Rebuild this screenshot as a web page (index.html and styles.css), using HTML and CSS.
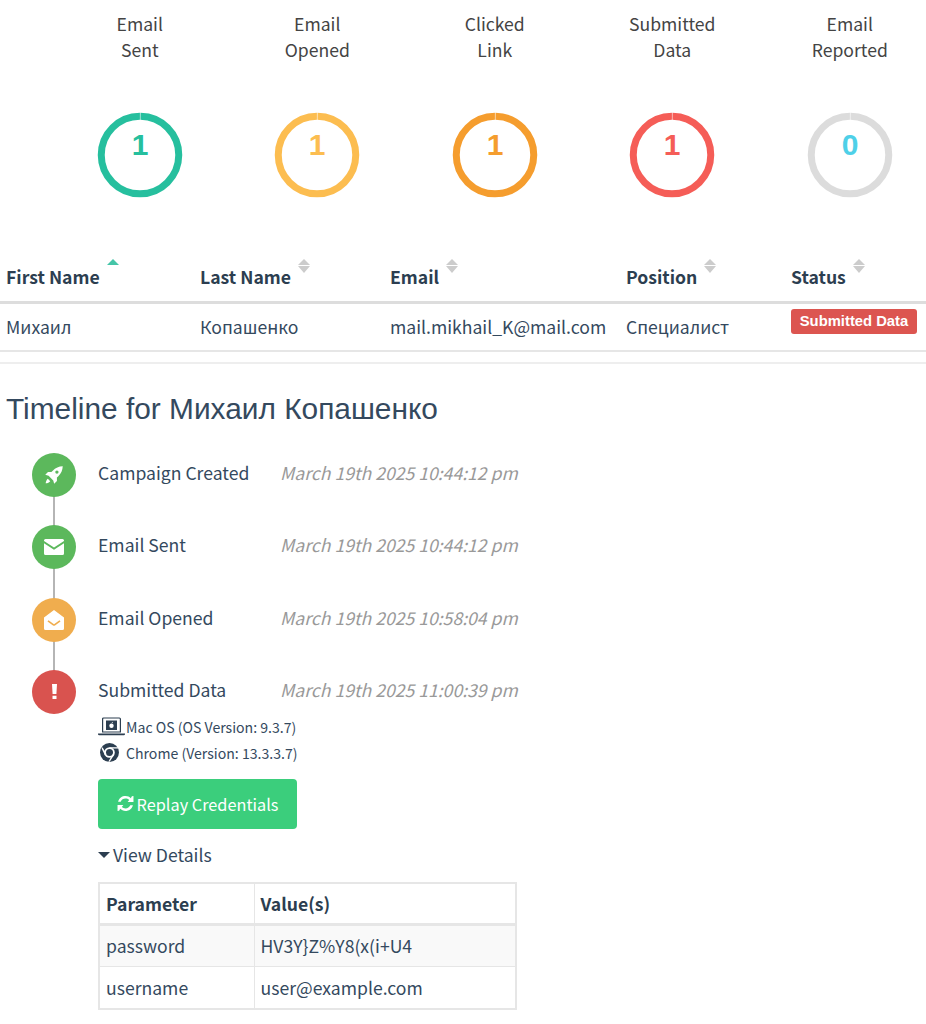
FILE: index.html
```html
<!DOCTYPE html>
<html lang="en">
<head>
<meta charset="utf-8">
<title>Timeline</title>
<link rel="stylesheet" href="styles.css">
</head>
<body>
<section class="stats">
  <div class="stat">
    <div class="stat-label">Email<br>Sent</div>
    <svg class="ring c-sent" viewBox="0 0 86 86" width="86" height="86"><circle class="arc" cx="43" cy="43" r="38.750"/><text x="43" y="43">1</text></svg>
  </div>
  <div class="stat">
    <div class="stat-label">Email<br>Opened</div>
    <svg class="ring c-opened" viewBox="0 0 86 86" width="86" height="86"><circle class="arc" cx="43" cy="43" r="38.750"/><text x="43" y="43">1</text></svg>
  </div>
  <div class="stat">
    <div class="stat-label">Clicked<br>Link</div>
    <svg class="ring c-clicked" viewBox="0 0 86 86" width="86" height="86"><circle class="arc" cx="43" cy="43" r="38.750"/><text x="43" y="43">1</text></svg>
  </div>
  <div class="stat">
    <div class="stat-label">Submitted<br>Data</div>
    <svg class="ring c-submitted" viewBox="0 0 86 86" width="86" height="86"><circle class="arc" cx="43" cy="43" r="38.750"/><text x="43" y="43">1</text></svg>
  </div>
  <div class="stat">
    <div class="stat-label">Email<br>Reported</div>
    <svg class="ring c-reported" viewBox="0 0 86 86" width="86" height="86"><circle class="arc" cx="43" cy="43" r="38.750"/><text x="43" y="43">0</text></svg>
  </div>
</section>

<table class="results">
  <thead>
    <tr>
      <th class="w1"><span class="th-text">First Name</span><span class="sort active"><i class="up"></i></span></th>
      <th class="w2"><span class="th-text">Last Name</span><span class="sort"><i class="up"></i><i class="down"></i></span></th>
      <th class="w3"><span class="th-text">Email</span><span class="sort"><i class="up"></i><i class="down"></i></span></th>
      <th class="w4"><span class="th-text">Position</span><span class="sort"><i class="up"></i><i class="down"></i></span></th>
      <th class="w5"><span class="th-text">Status</span><span class="sort"><i class="up"></i><i class="down"></i></span></th>
    </tr>
  </thead>
  <tbody>
    <tr>
      <td>Михаил</td>
      <td>Копашенко</td>
      <td>mail.mikhail_K@mail.com</td>
      <td>Специалист</td>
      <td class="status-cell"><span class="badge">Submitted Data</span></td>
    </tr>
  </tbody>
</table>

<hr class="rule">

<h2 class="heading">Timeline for Михаил Копашенко</h2>

<div class="timeline">
  <div class="event">
    <div class="dot green">
      <svg viewBox="0 0 24 24" width="20" height="20"><path fill="#fff" d="M22.500 1.500c-4.600.2-8.700 1.900-12 5.300L8.900 8.500H4.800L1.500 11.800l4 1.100 5.600 5.600 1.100 4 3.300-3.300v-4.100l1.700-1.600c3.400-3.300 5.100-7.400 5.300-12zM15.500 10.500a2 2 0 1 1 0-4 2 2 0 0 1 0 4zM4.600 16.500c-1.500 1-2.300 3.200-2.600 5.500 2.300-.3 4.500-1.100 5.500-2.600z"/></svg>
    </div>
    <span class="event-name">Campaign Created</span>
    <span class="event-date">March 19th 2025 10:44:12 pm</span>
  </div>
  <div class="event">
    <div class="dot green">
      <svg viewBox="0 0 20 16" width="20" height="16"><path fill="#fff" d="M1.500 0h17A1.500 1.500 0 0 1 20 1.500v.6l-10 6.500L0 2.100v-.6A1.500 1.500 0 0 1 1.500 0zM0 4.300l10 6.500 10-6.500v10.200a1.500 1.500 0 0 1-1.500 1.500h-17A1.500 1.500 0 0 1 0 14.500z"/></svg>
    </div>
    <span class="event-name">Email Sent</span>
    <span class="event-date">March 19th 2025 10:44:12 pm</span>
  </div>
  <div class="event">
    <div class="dot orange">
      <svg viewBox="0 0 20 20" width="20" height="20"><path fill="#fff" d="M10 0 L20 7.500V18.500A1.500 1.500 0 0 1 18.500 20h-17A1.500 1.500 0 0 1 0 18.500V7.500zM4.500 10.200l-1 1.300L9 15.500q1 .7 2 0l5.500-4-1-1.300L10 14.200z"/></svg>
    </div>
    <span class="event-name">Email Opened</span>
    <span class="event-date">March 19th 2025 10:58:04 pm</span>
  </div>
  <div class="event event-last">
    <div class="dot red">
      <svg viewBox="0 0 6 18" width="5" height="15"><path fill="#fff" d="M0 0h6l-.7 12H.7zM.6 14h4.800v4H.6z"/></svg>
    </div>
    <span class="event-name">Submitted Data</span>
    <span class="event-date">March 19th 2025 11:00:39 pm</span>
  </div>

  <div class="detail">
    <div class="env">
      <svg class="env-os" viewBox="0 0 27 20" width="27" height="20"><path fill="none" stroke="#2c3e50" stroke-width="1.200" d="M4.600 2q0-1 1-1h15.800q1 0 1 1V15H4.600z"/><path fill="#2c3e50" d="M0 16.500h27v.6q0 1.200-1.200 1.200H1.200Q0 18.300 0 17.100zM8 3.500h11v9.500H8z"/><circle cx="13.500" cy="8.700" r="2.200" fill="#fff"/><path fill="#fff" d="M13.600 6.300q.2-1.400 1.500-1.500-.1 1.400-1.500 1.500z"/></svg>
      <span>Mac OS (OS Version: 9.3.7)</span>
    </div>
    <div class="env">
      <svg class="env-chrome" viewBox="0 0 20 20" width="19" height="19"><circle cx="10" cy="10" r="10" fill="#2c3e50"/><circle cx="10" cy="10" r="5.600" fill="#fff"/><circle cx="10" cy="10" r="3.700" fill="#2c3e50"/><path fill="#fff" d="M10 4.400h8.700l.6 1.500H10zM5.200 12.800L1.700 5.800l1-1.200 4 7zM14.600 12.800L10.200 19.800l-1.500-.1 4.500-7.900z"/></svg>
      <span>Chrome (Version: 13.3.3.7)</span>
    </div>
    <button class="replay" type="button">
      <svg viewBox="0 0 16 16" width="17" height="17"><path fill="#fff" d="M14 1.200l1.500-.2v5.500H10l1.500-1.800c-1-.9-2.200-1.300-3.500-1.300-2 0-3.700 1.100-4.500 3H1C2 2.900 4.700 1 8 1c2 0 3.900.8 5 2zM2 14.800l-1.500.2V9.500H6l-1.500 1.800c1 .9 2.200 1.300 3.500 1.300 2 0 3.700-1.100 4.500-3H15c-1 3.500-3.700 5.400-7 5.400-2 0-3.900-.8-5-2z"/></svg>
      <span>Replay Credentials</span>
    </button>
    <div class="toggle"><i class="caret"></i><span>View Details</span></div>
    <table class="params">
      <thead>
        <tr><th class="p1">Parameter</th><th>Value(s)</th></tr>
      </thead>
      <tbody>
        <tr class="odd"><td>password</td><td>HV3Y}Z%Y8(x(i+U4</td></tr>
        <tr><td>username</td><td>user@example.com</td></tr>
      </tbody>
    </table>
  </div>
</div>
</body>
</html>
```
FILE: styles.css
```css
* { box-sizing: border-box; }
html, body { margin: 0; padding: 0; }
body {
  width: 926px;
  height: 1024px;
  overflow: hidden;
  background: #fff;
  color: #34495e;
  font-family: "Noto Sans CJK SC", "Noto Sans", sans-serif;
  font-size: 17.600px;
}

.stats {
  display: grid;
  grid-template-columns: repeat(5, 177.500px);
  padding: 11px 0 0 51px;
  height: 247px;
}
.stat { display: flex; flex-direction: column; align-items: center; }
.stat-label {
  color: #444;
  line-height: 26px;
  height: 52px;
  text-align: center;
}
.ring { margin-top: 49px; display: block; }
.arc {
  fill: none;
  stroke-width: 7;
  stroke-dasharray: 242.500 1;
  stroke-dashoffset: -0.5;
  transform: rotate(-90deg);
  transform-origin: 43px 43px;
}
.ring text {
  font-family: "Liberation Sans", sans-serif;
  font-weight: 700;
  font-size: 30px;
  text-anchor: middle;
}
.c-sent .arc { stroke: #26bf9e; }
.c-sent text { fill: #26bf9e; }
.c-opened .arc { stroke: #fcbd50; }
.c-opened text { fill: #fcbd50; }
.c-clicked .arc { stroke: #f59d2e; }
.c-clicked text { fill: #f59d2e; }
.c-submitted .arc { stroke: #f55d57; }
.c-submitted text { fill: #f55d57; }
.c-reported .arc { stroke: #dcdcdc; }
.c-reported text { fill: #4ed0e8; }

.results {
  width: 926px;
  border-collapse: collapse;
  table-layout: fixed;
}
.results th {
  height: 55px;
  padding: 0 0 0 6px;
  text-align: left;
  vertical-align: top;
  border-bottom: 3px solid #ddd;
  font-weight: 700;
  white-space: nowrap;
  color: #2c3e50;
}
.th-text { display: inline-block; line-height: 26px; padding-top: 17px; }
.w1 { width: 194px; }
.w2 { width: 190px; }
.w3 { width: 236px; }
.w4 { width: 165px; }
.w5 { width: 141px; }
.sort {
  display: inline-flex;
  flex-direction: column;
  gap: 1px;
  vertical-align: top;
  margin: 12px 0 0 7px;
}
.sort i { display: block; width: 0; height: 0; border-left: 6px solid transparent; border-right: 6px solid transparent; }
.sort .up { border-bottom: 6px solid #ccc; }
.sort .down { border-top: 7px solid #ccc; }
.sort.active .up { border-bottom-color: #45c5a8; }
.results td {
  height: 49px;
  padding: 0 0 0 6px;
  border-bottom: 2px solid #e6e6e6;
  line-height: 26px;
  vertical-align: middle;
  white-space: nowrap;
}
.results td.status-cell { vertical-align: top; padding-top: 5px; }
.badge {
  display: block;
  width: 126px;
  height: 25px;
  background: #dc5550;
  border-radius: 3px;
  color: #fff;
  font-family: "Liberation Sans", sans-serif;
  font-weight: 700;
  font-size: 14.800px;
  line-height: 24px;
  text-align: center;
}

.rule { border: 0; border-top: 2px solid #eee; margin: 10px 0 0; }

.heading {
  margin: 27px 0 0 6px;
  font-family: "Liberation Sans", sans-serif;
  font-weight: 400;
  font-size: 29.850px;
  line-height: 36px;
  height: 36px;
}

.timeline { padding: 26px 0 0 32px; }
.event {
  position: relative;
  display: flex;
  align-items: center;
  height: 72.300px;
  padding-bottom: 28px;
}
.event::before {
  content: "";
  position: absolute;
  left: 21px;
  top: 40px;
  width: 2px;
  height: 34px;
  background: #b5b5b5;
}
.event-last::before { display: none; }
.event-last { height: 44px; padding-bottom: 0; }
.dot {
  position: relative;
  flex: none;
  width: 44px;
  height: 44px;
  border-radius: 50%;
  display: flex;
  align-items: center;
  justify-content: center;
}
.dot.green { background: #5cb85c; }
.dot.orange { background: #f0ad4e; }
.dot.red { background: #d9534f; }
.event-name { width: 182px; margin-left: 22px; line-height: 26px; margin-top: -4px; }
.event-date { color: #999; font-style: italic; line-height: 26px; margin-top: -4px; }

.detail { padding-left: 66px; }
.env { display: flex; align-items: center; height: 26px; font-size: 14.100px; line-height: 26px; }
.env-os { margin-right: 1px; }
.env-chrome { margin: 0 7px 0 2px; }
.replay {
  display: flex;
  align-items: center;
  justify-content: center;
  gap: 3px;
  width: 199px;
  height: 50px;
  margin-top: 13px;
  padding: 0;
  border: 0;
  border-radius: 4px;
  background: #3bce7c;
  color: #fff;
  font-family: inherit;
  font-size: 16.300px;
}
.toggle { display: flex; align-items: center; height: 26px; margin-top: 13px; }
.caret {
  display: block;
  width: 0;
  height: 0;
  border-left: 6px solid transparent;
  border-right: 6px solid transparent;
  border-top: 6px solid #2c3e50;
  margin-right: 3px;
}
.params {
  width: 419px;
  margin-top: 14px;
  border-collapse: collapse;
  table-layout: fixed;
  border: 2px solid #e6e6e6;
}
.params th, .params td {
  height: 42px;
  padding: 0 0 0 6px;
  text-align: left;
  border: 1.500px solid #e6e6e6;
  line-height: 26px;
}
.params thead th { border-bottom: 3px solid #e6e6e6; font-weight: 700; color: #2c3e50; }
.p1 { width: 155px; }
.params .odd { background: #f9f9f9; }
```
